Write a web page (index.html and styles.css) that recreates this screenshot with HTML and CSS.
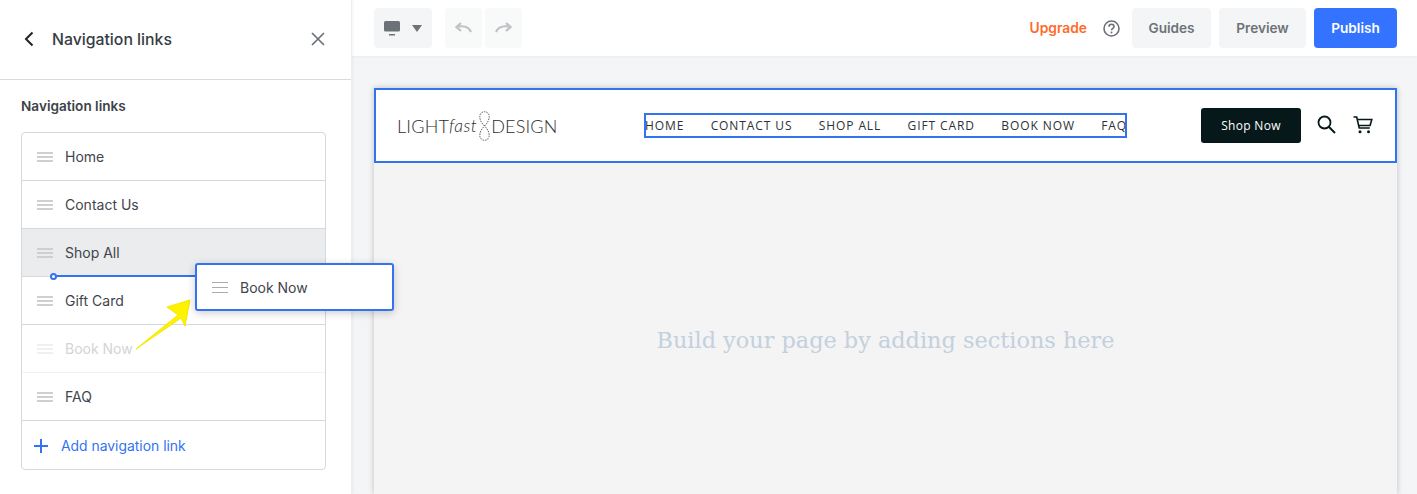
FILE: index.html
```html
<!DOCTYPE html>
<html lang="en">
<head>
<meta charset="utf-8">
<title>Navigation links</title>
<link rel="stylesheet" href="styles.css">
</head>
<body>
<div class="app">
  <aside class="sidebar">
    <header class="side-head">
      <svg class="back" width="12" height="16" viewBox="0 0 12 16"><path d="M9.500 1.500 3 8l6.500 6.500" fill="none" stroke="#1f2429" stroke-width="2"/></svg>
      <h1 class="side-title">Navigation links</h1>
      <svg class="close" width="14" height="14" viewBox="0 0 14 14"><path d="M1 1l12 12M13 1 1 13" fill="none" stroke="#6b7178" stroke-width="1.700"/></svg>
    </header>
    <section class="side-body">
      <h2 class="list-title">Navigation links</h2>
      <div class="list">
        <div class="row"><span class="grip"></span>Home</div>
        <div class="row"><span class="grip"></span>Contact Us</div>
        <div class="row row-active"><span class="grip"></span>Shop All</div>
        <div class="row"><span class="grip"></span>Gift Card</div>
        <div class="row row-ghost"><span class="grip"></span>Book Now</div>
        <div class="row"><span class="grip"></span>FAQ</div>
        <div class="add">
          <svg width="14" height="14" viewBox="0 0 14 14"><path d="M7 0v14M0 7h14" fill="none" stroke="#3373f0" stroke-width="2"/></svg>
          Add navigation link
        </div>
      </div>
    </section>
    <div class="drop-line"><span class="drop-dot"></span></div>
    <div class="drag-card"><span class="grip grip-dark"></span>Book Now</div>
    <svg class="arrow" width="58" height="52" viewBox="0 0 58 52"><path d="M1 50 43 16 32 8 55 1 50 27 46 19 Z" fill="#fff200" stroke="#f5e800" stroke-width="1" stroke-linejoin="round"/></svg>
  </aside>
  <main class="main">
    <header class="topbar">
      <div class="tools">
        <button class="tool device">
          <svg width="16" height="15" viewBox="0 0 16 15"><path d="M1.500 0h13A1.500 1.500 0 0 1 16 1.500V9a1.500 1.500 0 0 1-1.500 1.500h-13A1.500 1.500 0 0 1 0 9V1.500A1.500 1.500 0 0 1 1.500 0zM5 13h6v1.500H5z" fill="#6d7278"/></svg>
          <svg width="10" height="7" viewBox="0 0 10 7"><path d="M0 0h10L5 7z" fill="#6d7278"/></svg>
        </button>
        <div class="history">
          <button class="tool hist"><svg width="17" height="12" viewBox="0 0 17 12"><path d="M16 10C14 5.500 10 3.500 3.500 4.500M6 1 1.500 5 6 9" fill="none" stroke="#bfc2c5" stroke-width="2.200"/></svg></button>
          <button class="tool hist"><svg width="17" height="12" viewBox="0 0 17 12"><path d="M1 10C3 5.500 7 3.500 13.500 4.500M11 1l4.500 4L11 9" fill="none" stroke="#bfc2c5" stroke-width="2.200"/></svg></button>
        </div>
      </div>
      <div class="actions">
        <span class="upgrade">Upgrade</span>
        <svg class="help" width="17" height="17" viewBox="0 0 17 17"><circle cx="8.500" cy="8.500" r="7.500" fill="none" stroke="#6b7178" stroke-width="1.600"/><path d="M6 6.700c0-3.200 5-3.200 5 0 0 1.800-2.500 1.700-2.500 3.600" fill="none" stroke="#6b7178" stroke-width="1.600"/><circle cx="8.500" cy="12.600" r="1" fill="#6b7178"/></svg>
        <button class="btn btn-guides">Guides</button>
        <button class="btn btn-preview">Preview</button>
        <button class="btn btn-publish">Publish</button>
      </div>
    </header>
    <div class="canvas">
      <div class="page">
        <div class="site-header">
          <div class="logo">
            <span class="logo-word">LIGHT</span><em class="logo-fast">fast</em>
            <svg class="logo-knot" width="11" height="30" viewBox="0 0 11 30"><path d="M5.500 15C2 11.500.8 8.500.8 5.500a4.700 4.800 0 0 1 9.400 0c0 3-1.200 6-4.700 9.500S.8 21.500.8 24.500a4.700 4.800 0 0 0 9.400 0c0-3-1.200-6-4.700-9.500z" fill="none" stroke="#333" stroke-width=".8" stroke-dasharray="1.500 1"/></svg>
            <span class="logo-word">DESIGN</span>
          </div>
          <nav class="site-nav">
            <a>HOME</a><a>CONTACT US</a><a>SHOP ALL</a><a>GIFT CARD</a><a>BOOK NOW</a><a>FAQ</a>
          </nav>
          <div class="site-tools">
            <span class="shop-btn">Shop Now</span>
            <svg class="search" width="19" height="19" viewBox="0 0 19 19"><circle cx="7.500" cy="7.500" r="6" fill="none" stroke="#06181a" stroke-width="1.800"/><path d="M12 12l6 6" stroke="#06181a" stroke-width="2" fill="none"/></svg>
            <svg class="cart" width="20" height="18" viewBox="0 0 20 18"><path d="M.5 1h3.200l2.500 11h10.600M4.300 3.500h14.500l-1.700 6H5.600" fill="none" stroke="#06181a" stroke-width="1.600"/><circle cx="7" cy="15.800" r="1.500" fill="#06181a"/><circle cx="15.500" cy="15.800" r="1.500" fill="#06181a"/></svg>
          </div>
        </div>
        <div class="page-empty"><p class="empty-text">Build your page by adding sections here</p></div>
      </div>
    </div>
  </main>
</div>
</body>
</html>
```
FILE: styles.css
```css
* { box-sizing: border-box; }
html, body { margin: 0; height: 494px; overflow: hidden; }
body { font-family: Inter, "Liberation Sans", sans-serif; color: #3c4248; background: #fff; }
button { font: inherit; border: 0; }

.app { display: flex; height: 494px; }

.sidebar { position: relative; z-index: 2; flex: 0 0 352px; background: #fff; border-right: 1px solid #eceef0; box-shadow: 1px 0 3px rgba(0,0,0,.05); }
.side-head { display: flex; align-items: center; height: 80px; padding: 0 26px 1px 23px; border-bottom: 1px solid #d9dbdd; }
.back { margin-right: 17px; }
.side-title { flex: 1; margin: 0; font-size: 15.800px; font-weight: 500; color: #363c43; }
.side-body { padding: 18px 25px 0 21px; }
.list-title { margin: 0 0 17px; font-size: 13.600px; line-height: 17px; font-weight: 600; color: #3c4248; }
.list { border: 1px solid #d5d8dc; border-radius: 4px; }
.row { display: flex; align-items: center; height: 48px; padding-left: 15px; font-size: 14px; color: #3f454b; border-bottom: 1px solid #d5d8dc; }
.row-active { background: #ebecee; }
.row-ghost { color: #d2d4d6; border-bottom-color: #f1f2f3; }
.row-ghost .grip { opacity: .3; }
.grip { flex: none; width: 16px; height: 10px; margin-right: 12px; border-top: 2px solid #cdcfd1; border-bottom: 2px solid #cdcfd1; position: relative; }
.grip::after { content: ""; position: absolute; left: 0; right: 0; top: 2px; height: 2px; background: #cdcfd1; }
.grip-dark { height: 11px; border-width: 1px; border-color: #a9acaf; margin-right: 12px; }
.grip-dark::after { top: 4px; height: 1px; background: #a9acaf; }
.add { display: flex; align-items: center; gap: 13px; height: 48px; padding: 2px 0 0 12px; font-size: 13.900px; color: #3373f0; }

.drop-line { position: absolute; left: 53px; top: 275px; width: 148px; height: 2px; background: #3373f0; }
.drop-dot { position: absolute; left: -3px; top: -2px; width: 7px; height: 7px; border: 2px solid #3373f0; border-radius: 50%; background: #fff; }
.drag-card { position: absolute; z-index: 3; left: 195px; top: 263px; width: 199px; height: 48px; display: flex; align-items: center; padding-left: 15px; font-size: 14px; color: #3f454b; background: #fff; border: 2px solid #3373f0; border-radius: 3px; box-shadow: 0 2px 8px rgba(0,0,0,.2); }
.arrow { position: absolute; z-index: 2; left: 135px; top: 299px; }

.main { flex: 1; display: flex; flex-direction: column; min-width: 0; background: #f4f5f6; }
.topbar { flex: none; display: flex; justify-content: space-between; align-items: center; height: 56px; padding: 0 20px 0 22px; background: #fff; box-shadow: 0 1px 2px rgba(0,0,0,.04); }
.tools { display: flex; gap: 13px; }
.tool { display: flex; align-items: center; justify-content: center; height: 40px; border-radius: 4px; background: #f4f5f6; padding: 0; }
.device { width: 58px; gap: 12px; padding-left: 0; }
.history { display: flex; gap: 3px; }
.hist { width: 37px; background: #f8f9f9; }
.actions { display: flex; align-items: center; }
.upgrade { font-size: 13.800px; font-weight: 600; color: #ff6b2c; margin-right: 16px; }
.help { margin-right: 12px; }
.btn { height: 40px; border-radius: 4px; font-size: 13.600px; font-weight: 600; padding: 0; }
.btn-guides { width: 79px; margin-right: 8px; background: #f4f5f6; color: #6d7278; }
.btn-preview { width: 87px; margin-right: 8px; background: #f4f5f6; color: #6d7278; }
.btn-publish { width: 83px; background: #3373ff; color: #fff; }

.canvas { flex: 1; min-height: 0; padding: 32px 20px 0 22px; }
.page { height: 100%; display: flex; flex-direction: column; background: #f4f4f5; box-shadow: 0 0 6px rgba(0,0,0,.22); }
.site-header { flex: none; display: flex; align-items: center; height: 75px; padding: 0 22px 0 21px; background: #fff; border: 2px solid #3373f0; }
.logo { display: flex; align-items: center; width: 247px; font-family: Lato, "Open Sans", sans-serif; font-weight: 300; font-size: 18px; color: #2a2e31; }
.logo-word { letter-spacing: .2px; }
.logo-fast { font-size: 17.500px; letter-spacing: .4px; }
.logo-knot { margin: 0 1px 0 2px; }
.site-nav { display: flex; gap: 26.400px; width: 483px; height: 25px; align-items: center; border: 2px solid #3373f0; font-family: "Open Sans", sans-serif; font-size: 12px; letter-spacing: .9px; color: #2c3236; overflow: hidden; white-space: nowrap; }
.site-nav a:first-child { margin-left: -1px; }
.site-tools { display: flex; align-items: center; margin-left: auto; }
.shop-btn { display: flex; align-items: center; justify-content: center; width: 100px; height: 35px; margin-right: 16px; border-radius: 3px; background: #06181a; color: #fff; font-family: "Open Sans", sans-serif; font-size: 12px; letter-spacing: .3px; }
.search { margin: 0 17px 2px 0; }
.cart { margin-bottom: 2px; }
.page-empty { flex: 1; display: flex; justify-content: center; padding-top: 162px; }
.empty-text { margin: 0; font-family: "DejaVu Serif", serif; font-size: 22.400px; line-height: 30px; color: #c3d0dd; }
```
